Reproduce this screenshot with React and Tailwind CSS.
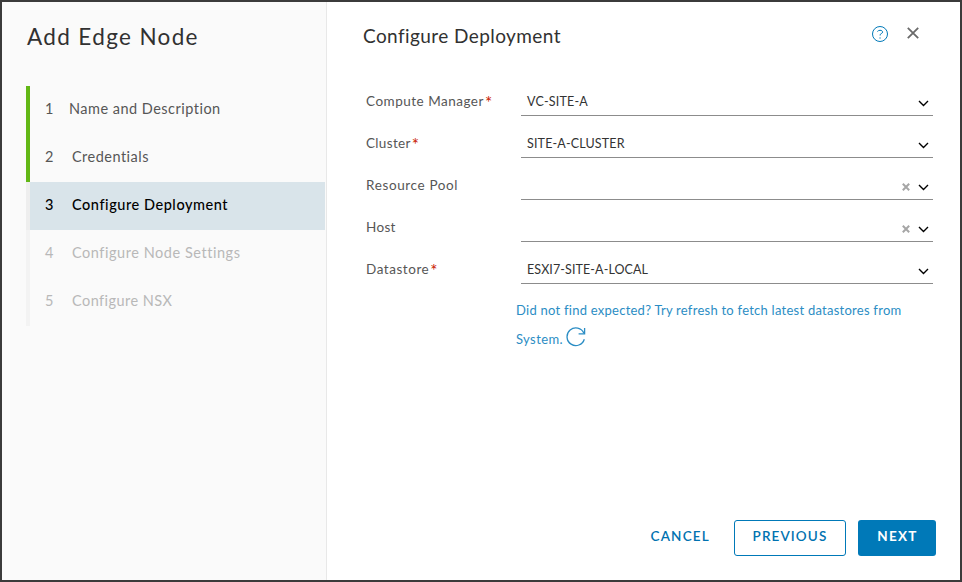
const steps = [
  { n: 1, label: "Name and Description", state: "done", track: "tracking-[0.48px]", pad: "w-6" },
  { n: 2, label: "Credentials", state: "done", track: "tracking-[0.48px]", pad: "w-[27px]" },
  { n: 3, label: "Configure Deployment", state: "active", track: "tracking-[0.55px]", pad: "w-[27px]" },
  { n: 4, label: "Configure Node Settings", state: "todo", track: "tracking-[0.54px]", pad: "w-[27px]" },
  { n: 5, label: "Configure NSX", state: "todo", track: "tracking-[0.44px]", pad: "w-[27px]" },
];

const stepStyles = {
  done: "border-[#62b715] text-[#565656]",
  active: "border-[#eeeeee] text-black font-medium",
  todo: "border-[#f3f3f3] text-[#b8b8b8]",
};

const fields = [
  { label: "Compute Manager", required: true, value: "VC-SITE-A", track: "tracking-[0.5px]", vtrack: "tracking-[0.2px]" },
  { label: "Cluster", required: true, value: "SITE-A-CLUSTER", track: "tracking-[0.33px]", vtrack: "tracking-[0.16px]" },
  { label: "Resource Pool", clearable: true, track: "tracking-[0.63px]" },
  { label: "Host", clearable: true, track: "tracking-[0.33px]" },
  { label: "Datastore", required: true, value: "ESXI7-SITE-A-LOCAL", track: "tracking-[0.55px]", vtrack: "tracking-[0.1px]" },
];

function Step({ step }) {
  return (
    <li className={`flex h-12 items-center border-l-4 pl-[15px] text-[14.5px] ${stepStyles[step.state]} ${step.state === "active" ? "bg-[#d9e4ea] bg-clip-padding" : ""}`}>
      <span className={`shrink-0 pb-0.5 ${step.pad}`}>{step.n}</span>
      <span className={`whitespace-nowrap pb-0.5 ${step.track}`}>{step.label}</span>
    </li>
  );
}

function Field({ field }) {
  return (
    <div className="flex h-[42px] items-end">
      <label className={`flex h-7 w-[155px] shrink-0 items-center whitespace-nowrap pb-0.5 text-[13.5px] text-[#565656] ${field.track}`}>
        {field.label}
        {field.required && <span className="ml-px pt-1 text-[17px] leading-5 text-[#c92100]">*</span>}
      </label>
      <button className="flex h-7 w-[412px] items-center border-b border-[#8c8c8c] pl-1.5 pr-1">
        <span className={`flex-1 whitespace-nowrap pt-0.5 text-left text-[12.5px] text-[#333] ${field.vtrack ?? ""}`}>{field.value}</span>
        {field.clearable && (
          <svg className="mr-2 mt-0.5 size-2" viewBox="0 0 8 8" fill="none" stroke="#a6a6a6" strokeWidth="2">
            <path d="M.8.8l6.4 6.4M7.2.8L.8 7.2" />
          </svg>
        )}
        <svg className="mt-[3px] h-[7px] w-[11px]" viewBox="0 0 11 7" fill="none" stroke="#000" strokeWidth="1.4">
          <path d="M1 1l4.5 4.5L10 1" />
        </svg>
      </button>
    </div>
  );
}

export default function App() {
  return (
    <div className="flex h-[582px] w-[962px] overflow-hidden border-2 border-[#3b3b3b] bg-white font-['Lato','Noto_Sans',sans-serif]">
      <aside className="w-[325px] shrink-0 border-r border-[#e8e8e8] bg-[#fafafa] pl-6 pr-px">
        <h1 className="h-[84px] whitespace-nowrap pl-px pt-[18px] text-[22.5px] leading-[33px] tracking-[1.35px] text-[#313131]">Add Edge Node</h1>
        <ol>
          {steps.map((s) => <Step key={s.n} step={s} />)}
        </ol>
      </aside>
      <main className="flex flex-1 flex-col pl-9 pr-6">
        <header className="flex h-[72px] items-start">
          <h2 className="flex-1 pt-5 text-[19px] leading-7 tracking-[0.42px] text-[#313131]">Configure Deployment</h2>
          <button aria-label="Help" className="mt-6">
            <svg className="size-4" viewBox="0 0 16 16" fill="none" stroke="#0079b8" strokeWidth="1">
              <circle cx="8" cy="8" r="7.5" />
              <path d="M5.4 5.5C6 4.7 6.9 4.3 8 4.3c1.6 0 2.6.7 2.6 1.8 0 1.5-2.5 1.5-2.5 2.8v.6" />
              <path d="M7.4 12h1.3" />
            </svg>
          </button>
          <button aria-label="Close" className="ml-[19px] mr-[17px] mt-[25px]">
            <svg className="size-3" viewBox="0 0 12 12" fill="none" stroke="#6a6a6a" strokeWidth="1.8">
              <path d="M.8.8l10.4 10.4M11.2.8L.8 11.2" />
            </svg>
          </button>
        </header>
        <form className="pl-[3px]">
          {fields.map((f) => <Field key={f.label} field={f} />)}
          <p className="ml-[150px] mt-3 whitespace-nowrap text-[13px] leading-[29px] text-[#2b8dc4]">
            <span className="block tracking-[0.25px]">Did not find expected? Try refresh to fetch latest datastores from</span>
            <span className="flex items-center tracking-[0.4px]">
              System.
              <svg className="-mt-1.5 ml-[3.5px] size-5" viewBox="0 0 20 20" fill="none" stroke="#2b8dc4" strokeWidth="1.3">
                <path d="M18.3 12.2A8.8 8.8 0 1 1 17.9 6.2" />
                <path d="M18.6 1v5.8h-6" />
              </svg>
            </span>
          </p>
        </form>
        <footer className="mb-6 mt-auto flex h-9 items-stretch justify-end text-[13.5px] font-semibold">
          <button className="mr-6 pb-[3px] tracking-[1.2px] text-[#0072b0]">CANCEL</button>
          <button className="mr-3 w-28 rounded-[3px] border border-[#0079b8] pb-[3px] tracking-[1.1px] text-[#0072b0]">PREVIOUS</button>
          <button className="w-[78px] rounded-[3px] bg-[#0079b8] pb-[3px] pl-px font-bold tracking-[1.3px] text-white">NEXT</button>
        </footer>
      </main>
    </div>
  );
}
